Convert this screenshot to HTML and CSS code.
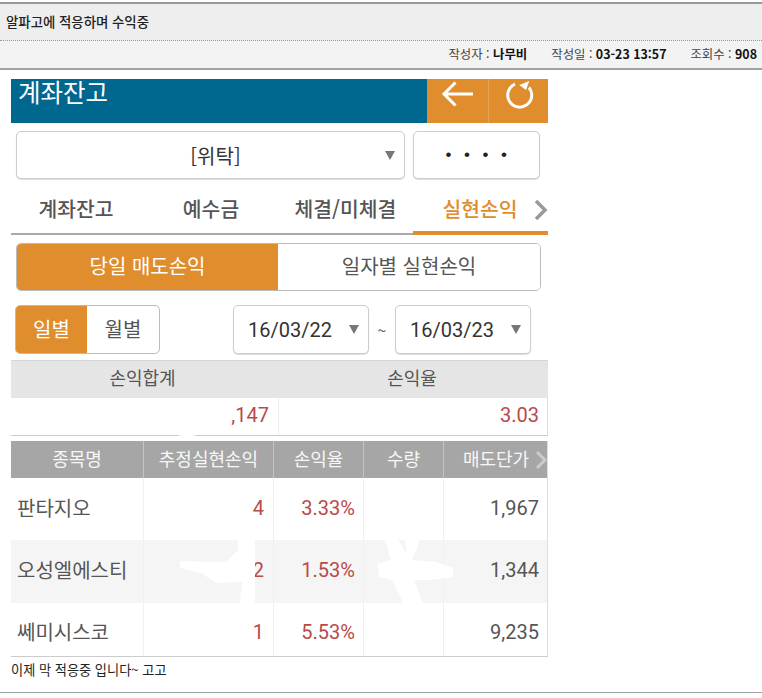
FILE: index.html
```html
<!DOCTYPE html>
<html lang="ko">
<head>
<meta charset="utf-8">
<title>알파고에 적응하며 수익중</title>
<link rel="stylesheet" href="styles.css">
</head>
<body>
<header class="post-head">
  <h1 class="post-title">알파고에 적응하며 수익중</h1>
  <div class="post-meta">
    <span>작성자 : <b>나무비</b></span>
    <span>작성일 : <b>03-23 13:57</b></span>
    <span>조회수 : <b>908</b></span>
  </div>
</header>
<main class="shot">
  <div class="app-bar">
    <div class="app-title">계좌잔고</div>
    <div class="app-btn">
      <svg width="34" height="30" viewBox="0 0 34 30"><path d="M32 15H3.500M14.500 3.500 3 15l11.500 11.500" fill="none" stroke="#fff" stroke-width="3"/></svg>
    </div>
    <div class="app-btn app-btn-r">
      <svg width="30" height="30" viewBox="0 0 30 30"><path d="M10 4.100A12 12 0 1 0 24 7.500" fill="none" stroke="#fff" stroke-width="3"/><path d="M14.300 5 24.300 1 21 10z" fill="#fff"/></svg>
    </div>
  </div>
  <div class="acct-row">
    <div class="box acct-select"><span class="acct-name">[위탁]</span><i class="caret"></i></div>
    <div class="box acct-pw">••••</div>
  </div>
  <nav class="tabs">
    <span class="tab t1">계좌잔고</span>
    <span class="tab t2">예수금</span>
    <span class="tab t3">체결/미체결</span>
    <span class="tab t4 on">실현손익</span>
    <svg class="tab-arrow" width="14" height="22" viewBox="0 0 14 22"><path d="M2 2l9 9-9 9" fill="none" stroke="#999" stroke-width="3.500"/></svg>
  </nav>
  <div class="seg">
    <div class="seg-item seg-a">당일 매도손익</div>
    <div class="seg-item seg-b">일자별 실현손익</div>
  </div>
  <div class="filter">
    <div class="period">
      <div class="per per-on">일별</div>
      <div class="per">월별</div>
    </div>
    <div class="dates">
      <div class="box date">16/03/22<i class="caret"></i></div>
      <span class="tilde">~</span>
      <div class="box date">16/03/23<i class="caret"></i></div>
    </div>
  </div>
  <section class="summary">
    <div class="sum-h">손익합계</div>
    <div class="sum-h">손익율</div>
    <div class="sum-v">,147</div>
    <div class="sum-v">3.03</div>
    <span class="sum-gap"></span>
  </section>
  <section class="grid">
    <div class="grid-row grid-head">
      <div>종목명</div><div>추정실현손익</div><div>손익율</div><div>수량</div><div class="last">매도단가<svg class="head-arrow" width="12" height="20" viewBox="0 0 12 20"><path d="M2 2l8 8-8 8" fill="none" stroke="#ccc" stroke-width="3"/></svg></div>
    </div>
    <div class="grid-row r1">
      <div class="name">판타지오</div><div class="num red">4</div><div class="num red pct">3.33%</div><div></div><div class="num">1,967</div>
    </div>
    <div class="grid-row r2">
      <div class="name">오성엘에스티</div><div class="num red">2</div><div class="num red pct">1.53%</div><div></div><div class="num">1,344</div>
    </div>
    <div class="grid-row r3">
      <div class="name">쎄미시스코</div><div class="num red">1</div><div class="num red pct">5.53%</div><div></div><div class="num">9,235</div>
    </div>
    <svg class="redact" width="537" height="63" viewBox="0 0 537 63">
      <path d="M169 21 215 22 227 10V0H244V63H229L231 42 205 43 190 33 169 28Z" fill="#fff"/>
      <path d="M374 0H387L396 14 394 0H409L401 20 425 22 442 28V37L420 40H403L412 63H392L381 40 368 37 366 24 380 20Z" fill="#fff"/>
    </svg>
  </section>
  <p class="comment">이제 막 적응중 입니다~ 고고</p>
</main>
<div class="post-end"></div>
</body>
</html>
```
FILE: styles.css
```css
* { box-sizing: border-box; }
html, body { margin: 0; padding: 0; background: #fff; }
body { width: 762px; height: 698px; overflow: hidden; font-family: "Noto Sans CJK KR", "Roboto", sans-serif; color: #555; }

.post-head { margin-top: 2px; border-top: 2px solid #999; border-bottom: 2px solid #a3a3a3; background: #f3f3f3; }
.post-title { margin: 0; height: 37px; padding: 0 0 0 6px; background: #eee; border-bottom: 1px dotted #999; font-size: 13.400px; font-weight: 500; line-height: 34px; color: #222; }
.post-meta { height: 27px; padding: 0 5px 0 0; display: flex; justify-content: flex-end; gap: 24px; font-size: 12.400px; line-height: 26px; color: #444; }
.post-meta b { color: #111; }

.shot { width: 537px; margin: 9px 0 0 11px; }

.app-bar { height: 44px; display: flex; background: #00688f; }
.app-title { flex: 1; padding-left: 7px; font-size: 24.500px; line-height: 26px; color: #fff; }
.app-btn { width: 61px; background: #e08d2e; display: flex; align-items: center; justify-content: center; padding-bottom: 15px; }
.app-btn-r { width: 60px; padding: 0 0 12px 3px; border-left: 1px solid #e5a25a; }

.box { background: #fff; border: 1px solid #ccc; border-radius: 5px; box-shadow: 0 1px 1px #ddd; display: flex; align-items: center; }
.caret { width: 0; height: 0; border-left: 5px solid transparent; border-right: 5px solid transparent; border-top: 9px solid #777; }

.acct-row { display: flex; gap: 8px; padding: 8px 0 0 5px; }
.acct-select { width: 389px; height: 48px; padding: 0 9px 0 0; }
.acct-name { flex: 1; padding-left: 29px; text-align: center; font-size: 20px; color: #333; }
.acct-pw { width: 127px; height: 48px; padding-left: 12px; justify-content: center; font-family: "Liberation Sans", sans-serif; font-size: 17px; letter-spacing: 12.500px; color: #222; }

.tabs { height: 50px; margin-top: 6px; position: relative; display: grid; grid-template-columns: 132px 132px 138px 135px; border-bottom: 2px solid #a8a8a8; }
.tab { font-size: 20.400px; font-weight: 500; color: #555; text-align: center; line-height: 47px; white-space: nowrap; }
.t1 { padding-right: 2px; }
.t2 { padding-left: 4px; }
.t3 { padding-left: 3px; }
.t4 { color: #e08d2e; height: 50px; border-bottom: 4px solid #e08d2e; padding-right: 1px; }
.tab-arrow { position: absolute; right: 0; top: 14px; }

.seg { width: 525px; height: 48px; margin: 8px 0 0 5px; display: flex; border: 1px solid #bbb; border-radius: 5px; overflow: hidden; }
.seg-item { display: flex; align-items: center; justify-content: center; padding-bottom: 3px; font-size: 20px; }
.seg-a { width: 261px; background: #e08d2e; color: #fff; }
.seg-b { flex: 1; background: #fff; color: #555; }

.filter { display: flex; margin: 14px 0 0 4px; height: 49px; }
.period { width: 145px; display: flex; border: 1px solid #bbb; border-radius: 5px; overflow: hidden; }
.per { flex: 1; display: flex; align-items: center; justify-content: center; padding-bottom: 3px; font-size: 20px; color: #555; }
.per-on { flex: 0 0 71px; background: #e08d2e; color: #fff; }
.dates { display: flex; align-items: center; margin-left: 73px; }
.date { width: 136px; height: 49px; padding: 0 9px 0 14px; justify-content: space-between; font-family: "Roboto", sans-serif; font-size: 20px; color: #333; }
.tilde { width: 26px; text-align: center; font-size: 16px; color: #666; }

.summary { margin-top: 6px; position: relative; display: grid; grid-template-columns: 267px 270px; border-right: 1px solid #ddd; border-bottom: 1px solid #ccc; }
.sum-h { height: 38px; padding-right: 4px; background: #e5e5e5; border-top: 1px solid #d5d5d5; text-align: center; font-size: 18px; line-height: 33px; color: #555; }
.sum-h + .sum-h { padding-right: 2px; }
.sum-v { height: 37px; padding-right: 9px; text-align: right; font-family: "Roboto", sans-serif; font-size: 20px; line-height: 35px; color: #b84a48; }
.sum-v + .sum-v { border-left: 1px solid #eee; }
.sum-gap { position: absolute; left: 168px; bottom: -2px; width: 16px; height: 3px; background: #fff; }

.grid { margin-top: 5px; position: relative; border-bottom: 1px solid #ccc; border-right: 1px solid #ddd; }
.grid-row { display: grid; grid-template-columns: 132px 130px 90px 80px 105px; grid-template-rows: minmax(0, 1fr); }
.grid-row > div + div { border-left: 1px solid #f0f0f0; }
.grid-head { height: 37px; background: #a6a6a6; }
.grid-head > div { text-align: center; font-size: 18px; line-height: 34px; color: #f7f7f7; white-space: nowrap; }
.grid-head > div + div { border-left: 1px solid #c4c4c4; }
.grid-head .last { position: relative; padding-right: 0; }
.head-arrow { position: absolute; right: 1px; top: 9px; }
.r1 { height: 62px; }
.r2 { height: 63px; background: #f5f5f5; }
.r3 { height: 53px; }
.name { padding-left: 6px; font-size: 20px; line-height: 60px; color: #555; }
.r3 .name { line-height: 58px; }
.num { padding-right: 9px; text-align: right; font-family: "Roboto", sans-serif; font-size: 20px; line-height: 60px; color: #555; }
.r3 .num { line-height: 59px; }
.red { color: #b84a48; }
.pct { padding-right: 8px; }
.redact { position: absolute; left: 0; top: 99px; }

.comment { margin: 4px 0 0; font-size: 13.200px; line-height: 18px; color: #222; }
.post-end { position: absolute; left: 0; top: 692px; width: 762px; height: 1px; background: #a3a3a3; }
```
